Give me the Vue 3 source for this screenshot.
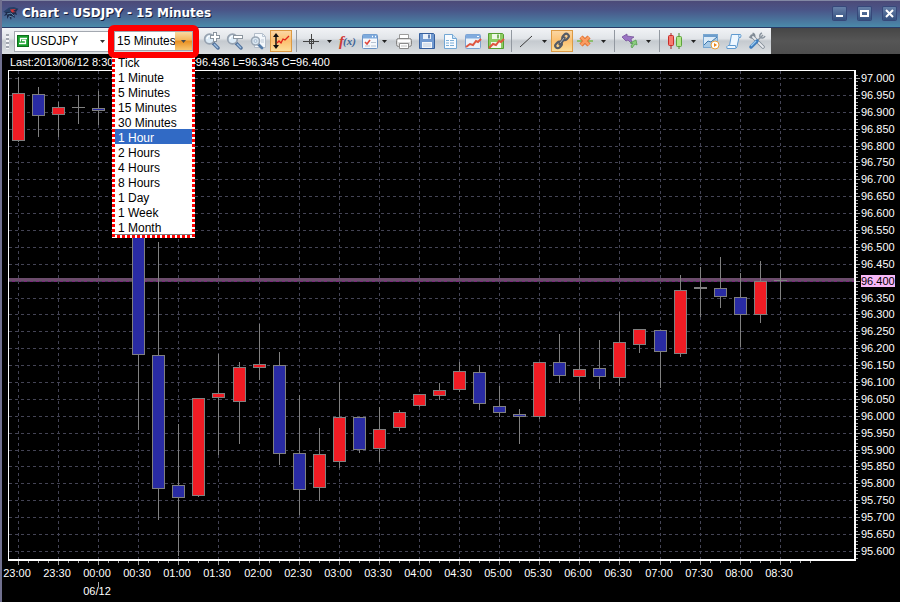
<script setup>
import { ref } from 'vue'

const timeframes = [
  'Tick', '1 Minute', '5 Minutes', '15 Minutes', '30 Minutes', '1 Hour',
  '2 Hours', '4 Hours', '8 Hours', '1 Day', '1 Week', '1 Month'
]
const hovered = ref('1 Hour')
const timeframe = ref('15 Minutes')
const symbol = ref('USDJPY')

const tools = [
  { id: 'zoom-in', label: 'Zoom in' },
  { id: 'zoom-out', label: 'Zoom out' },
  { id: 'zoom-page', label: 'Zoom to page' },
  { id: 'autoscale', label: 'Auto scale', on: true },
  { id: 'sep' },
  { id: 'cross', label: 'Crosshair' },
  { id: 'caret', label: 'Crosshair options' },
  { id: 'fx', label: 'Indicators' },
  { id: 'panel', label: 'Display settings' },
  { id: 'caret', label: 'Display options', tight: true },
  { id: 'print', label: 'Print' },
  { id: 'save', label: 'Save' },
  { id: 'doc', label: 'Export data' },
  { id: 'chart', label: 'Load chart' },
  { id: 'save-chart', label: 'Save chart' },
  { id: 'sep' },
  { id: 'line', label: 'Trend line' },
  { id: 'caret', label: 'Line options' },
  { id: 'link', label: 'Link charts', on: true },
  { id: 'delete', label: 'Delete line' },
  { id: 'caret', label: 'Delete options' },
  { id: 'sep', wide: true },
  { id: 'arrows', label: 'Signals' },
  { id: 'caret', label: 'Signal options' },
  { id: 'sep', wide: true },
  { id: 'candles', label: 'Chart type' },
  { id: 'caret', label: 'Chart type options' },
  { id: 'play', label: 'Replay' },
  { id: 'script', label: 'Script' },
  { id: 'tools', label: 'Settings' }
]

// x position of a candle slot
const slotX = (i) => 18 + 20 * i + Math.floor((i + 10) / 21)

// high, body top, body bottom, low, direction (u: up, d: down, n: flat)
const candles = [
  [77, 93, 141, 142, 'u'], [87, 94, 116, 137, 'd'], [102, 107, 115, 137, 'u'],
  [95, 107, 108, 124, 'n'], [91, 108, 111, 125, 'd'], [100, 111, 175, 190, 'd'],
  [160, 174, 355, 430, 'd'], [242, 355, 489, 520, 'd'], [424, 485, 498, 556, 'd'],
  [398, 398, 496, 497, 'u'], [354, 393, 398, 455, 'u'], [362, 367, 402, 444, 'u'],
  [324, 364, 368, 380, 'u'], [352, 365, 454, 465, 'd'], [395, 453, 490, 515, 'd'],
  [428, 454, 488, 501, 'u'], [382, 417, 462, 468, 'u'], [417, 417, 450, 453, 'd'],
  [407, 429, 449, 462, 'u'], [410, 412, 428, 431, 'u'], [394, 394, 406, 407, 'u'],
  [383, 390, 396, 400, 'u'], [362, 371, 390, 392, 'u'], [365, 372, 404, 410, 'd'],
  [386, 406, 413, 417, 'd'], [409, 414, 417, 444, 'd'], [362, 362, 417, 419, 'u'],
  [334, 362, 376, 383, 'd'], [328, 369, 377, 401, 'u'], [340, 368, 377, 389, 'd'],
  [312, 342, 378, 386, 'u'], [329, 329, 345, 353, 'u'], [330, 330, 352, 388, 'd'],
  [275, 290, 354, 357, 'u'], [267, 287, 289, 317, 'n'], [257, 288, 297, 308, 'd'],
  [273, 297, 315, 347, 'd'], [261, 281, 315, 323, 'u'], [270, 280, 281, 300, 'n']
].map(([high, top, bottom, low, dir], i) => ({ high, top, bottom, low, dir, x: slotX(i) }))

const prices = Array.from({ length: 29 }, (_, k) => ({
  y: Math.round(78 + 16.89 * k),
  text: (97 - 0.05 * k).toFixed(3),
  current: k === 12
}))

const priceTicks = Array.from({ length: 144 }, (_, k) => Math.round(74.6 + 3.378 * k))

const times = Array.from({ length: 20 }, (_, k) => {
  const minutes = (23 * 60 + 30 * k) % 1440
  return {
    x: slotX(2 * k),
    text: String(Math.floor(minutes / 60)).padStart(2, '0') + ':' + String(minutes % 60).padStart(2, '0')
  }
})

const timeTicks = Array.from({ length: 80 }, (_, k) => slotX(Math.floor(k / 2)) + (k % 2) * 10)
</script>

<template>
  <main class="window">
    <header class="titlebar">
      <svg class="logo" viewBox="0 0 18 18" aria-hidden="true">
        <path d="M2 8 L6 5 L11 4 L16 5 L14 8 L15 11 L12 10 L13 14 L10 12 L9 16 L7 12 L5 15 L5 11 L2 12 L4 9 Z" fill="#1d2c4c" />
        <path d="M1 8 L7 3.500 L12 3 L17 5 L11 6 L8 8 L5 8 Z" fill="#263f66" />
        <path d="M8 5.500 L14 5 L11 7 L14 8 L10 8.500 Z" fill="#d2383c" />
        <path d="M5 10 L9 9 L12 12 M7 12 L10 13" stroke="#5f87a8" fill="none" />
      </svg>
      <h1>Chart - {{ symbol }} - {{ timeframe }}</h1>
      <div class="controls">
        <button type="button" aria-label="Minimize">
          <svg viewBox="0 0 13 13"><path d="M3 9h7" stroke="#fff" stroke-width="2" /></svg>
        </button>
        <button type="button" aria-label="Maximize">
          <svg viewBox="0 0 13 13"><rect x="3" y="4" width="7" height="5" fill="none" stroke="#fff" stroke-width="2" /></svg>
        </button>
        <button type="button" aria-label="Close">
          <svg viewBox="0 0 13 13"><path d="M3 3l7 7M10 3l-7 7" stroke="#fff" stroke-width="2" /></svg>
        </button>
      </div>
    </header>

    <div class="toolrow">
      <nav class="toolbar" aria-label="Chart tools">
        <span class="grip"></span>
        <div class="combo symbol">
          <svg class="badge" viewBox="0 0 12 12" aria-hidden="true">
            <rect x="0.500" y="0.500" width="11" height="11" fill="#18a02c" stroke="#0c6e1a" />
            <path d="M10 3.500H3.500v3M2 8.500h6.500v-3H5" fill="none" stroke="#fff" stroke-width="1.300" />
          </svg>
          <select v-model="symbol" aria-label="Symbol">
            <option>USDJPY</option>
          </select>
          <svg class="arrow" viewBox="0 0 5 3" aria-hidden="true"><path d="M0 0h5L2.500 3z" fill="#333" /></svg>
        </div>
        <div class="combo period">
          <select v-model="timeframe" aria-label="Timeframe">
            <option v-for="t in timeframes" :key="t">{{ t }}</option>
          </select>
          <span class="drop">
            <svg viewBox="0 0 5 3" aria-hidden="true"><path d="M0 0h5L2.500 3z" fill="#4a4a4a" /></svg>
          </span>
          <ul class="menu" role="listbox" aria-label="Timeframes">
            <li
              v-for="t in timeframes"
              :key="t"
              role="option"
              :aria-selected="t === hovered"
              :class="{ active: t === hovered }"
              @mouseenter="hovered = t"
              @click="timeframe = t"
            >{{ t }}</li>
          </ul>
          <span class="ring"></span>
        </div>

        <div class="tools">
          <template v-for="(tool, n) in tools" :key="n">
            <span v-if="tool.id === 'sep'" class="sep" :class="{ wide: tool.wide }"></span>
            <button v-else-if="tool.id === 'caret'" type="button" class="caret" :class="{ tight: tool.tight }" :aria-label="tool.label">
              <svg viewBox="0 0 5 3"><path d="M0 0h5L2.500 3z" fill="#222" /></svg>
            </button>
            <button v-else type="button" class="tool" :class="{ on: tool.on }" :aria-label="tool.label">
              <svg viewBox="0 0 18 18" fill="none">
                <template v-if="tool.id === 'zoom-in' || tool.id === 'zoom-out'">
                  <path d="M10 11l5 5" stroke="#54749c" stroke-width="3.500" stroke-linecap="round" />
                  <path d="M11 12l4 4" stroke="#9dc0e4" stroke-width="1.300" />
                  <circle cx="6.500" cy="7" r="4.800" fill="#dcebf7" stroke="#97a3b1" stroke-width="1.800" />
                  <path d="M4 7a3 3 0 0 1 3-3" stroke="#fff" stroke-width="1.200" />
                  <path :d="tool.id === 'zoom-in' ? 'M7 5h10M12 0v10' : 'M7 5h10'" stroke="#8b959f" stroke-width="4" />
                  <path :d="tool.id === 'zoom-in' ? 'M8 5h8M12 1v8' : 'M8 5h8'" stroke="#fff" stroke-width="2" />
                </template>
                <template v-else-if="tool.id === 'zoom-page'">
                  <path d="M5.500 1.500h8l3 3v11h-11z" fill="#f3f7fb" stroke="#b3bdc9" />
                  <path d="M13.500 1.500v3h3M12 8h3M12 10h3" stroke="#bac7d5" />
                  <path d="M9 12l4 4" stroke="#547ba8" stroke-width="2.800" stroke-linecap="round" />
                  <circle cx="6.500" cy="9" r="4" fill="#dbe8f3" stroke="#9aa7b5" stroke-width="1.600" />
                  <circle cx="6.500" cy="9" r="1.500" stroke="#a9bdd1" />
                </template>
                <template v-else-if="tool.id === 'autoscale'">
                  <path d="M4 3v12" stroke="#111" stroke-width="1.500" />
                  <path d="M1 5l3-4 3 4zM1 13l3 4 3-4z" fill="#111" />
                  <path d="M5 11l2-2 2 2 2-4 2 1 4-4" stroke="#e22218" stroke-width="1.300" />
                </template>
                <template v-else-if="tool.id === 'cross'">
                  <path d="M1 9.500h16M9.500 2v15" stroke="#444" />
                  <rect x="7.500" y="7.500" width="4" height="4" stroke="#444" />
                </template>
                <template v-else-if="tool.id === 'fx'">
                  <text x="1" y="14" class="fx-f">f</text>
                  <text x="5" y="13" class="fx-x">(x)</text>
                </template>
                <template v-else-if="tool.id === 'panel'">
                  <rect x="1.500" y="2.500" width="15" height="14" rx="1" fill="#f5f8fc" stroke="#6d94c5" />
                  <path d="M2 4.500h14" stroke="#7daadd" stroke-width="4" />
                  <path d="M11 4.500h1M14 4.500h1" stroke="#fff" stroke-width="1.500" />
                  <path d="M4 10l2 2 3-4" stroke="#e0483c" stroke-width="1.600" />
                  <path d="M10 10.500h5M4 14h5M10 14h5" stroke="#b6c3d2" />
                </template>
                <template v-else-if="tool.id === 'print'">
                  <path d="M4.500 7V2.500h9V7" fill="#fff" stroke="#9b9b9b" />
                  <rect x="1.500" y="6.500" width="15" height="8" rx="2" fill="#ddd" stroke="#858585" />
                  <path d="M3 9h12" stroke="#fff" stroke-width="2" />
                  <path d="M4.500 11.500h9v5h-9z" fill="#fff" stroke="#8c8c8c" />
                  <path d="M6 14h6" stroke="#c3c3c3" />
                </template>
                <template v-else-if="tool.id === 'save'">
                  <path d="M1.500 1.500h14l1 1v14h-15z" fill="#7099d0" stroke="#365f9d" />
                  <rect x="5" y="2" width="8" height="5" fill="#e8f0fa" />
                  <path d="M11 2.500v4" stroke="#365f9d" stroke-width="1.500" />
                  <rect x="4" y="10" width="10" height="6" fill="#f3f6fa" />
                  <path d="M5 12h8M5 14h8" stroke="#bccce0" />
                </template>
                <template v-else-if="tool.id === 'doc'">
                  <path d="M3.500 2.500h8l4 4v10h-12z" fill="#f7fbff" stroke="#72a7d4" />
                  <path d="M11.500 2.500v4h4" fill="#cfe4f6" stroke="#72a7d4" />
                  <path d="M5 8.500h8M5 11h8M5 13.500h8" stroke="#7daed6" stroke-width="1.200" />
                  <path d="M8.500 8v6" stroke="#f7fbff" />
                </template>
                <template v-else-if="tool.id === 'chart'">
                  <rect x="1.500" y="2.500" width="15" height="14" rx="1" fill="#eaf1f9" stroke="#7ba1d0" />
                  <path d="M2 4.500h14" stroke="#81abde" stroke-width="4" />
                  <path d="M13 4.500h2" stroke="#fff" />
                  <path d="M2 15l4-3 3 1 3-4 2 1 3-3" stroke="#df563f" stroke-width="2" />
                </template>
                <template v-else-if="tool.id === 'save-chart'">
                  <path d="M1.500 1.500h14l1 1v14h-15z" fill="#8dcb63" stroke="#559f32" />
                  <rect x="5" y="2" width="8" height="5" fill="#edf8e7" />
                  <path d="M11 2.500v4" stroke="#559f32" stroke-width="1.500" />
                  <rect x="4" y="10" width="10" height="6" fill="#f4f9f0" />
                  <path d="M2 16l4-4 3 1 3-4 2 1 3-3" stroke="#df563f" stroke-width="2" />
                </template>
                <path v-else-if="tool.id === 'line'" d="M3 15L15 4" stroke="#3a3a3a" />
                <template v-else-if="tool.id === 'link'">
                  <rect x="9" y="2.500" width="7" height="5" rx="2.500" transform="rotate(-45 12.500 5)" stroke="#555b66" stroke-width="2.200" />
                  <rect x="2" y="10.500" width="7" height="5" rx="2.500" transform="rotate(-45 5.500 13)" stroke="#555b66" stroke-width="2.200" />
                  <path d="M7 12l4-6" stroke="#555b66" stroke-width="3.500" stroke-linecap="round" />
                  <path d="M7 11l4-5" stroke="#aeb2b8" />
                </template>
                <template v-else-if="tool.id === 'delete'">
                  <path d="M1 9h16" stroke="#78b94f" stroke-width="1.500" />
                  <path d="M5 5l8 8M13 5l-8 8" stroke="#dc6b2b" stroke-width="4.500" />
                  <path d="M5 5l8 8M13 5l-8 8" stroke="#fa9c62" stroke-width="2.500" />
                </template>
                <template v-else-if="tool.id === 'arrows'">
                  <path d="M1 5l5-3 0 2 7 1-3 2 1 5-4-4-2 1z" fill="#9a74c4" stroke="#765099" stroke-width="0.800" />
                  <path d="M9 11l6-3 1 5-2-1-3 4-1-2 2-3z" fill="#8ccf7e" stroke="#579c50" stroke-width="0.800" />
                </template>
                <template v-else-if="tool.id === 'candles'">
                  <path d="M5 1v16" stroke="#a42222" />
                  <rect x="2.500" y="3.500" width="5" height="10" rx="1" fill="#f77a70" stroke="#c72d28" />
                  <path d="M13 1v16" stroke="#4b8c2c" />
                  <rect x="10.500" y="4.500" width="5" height="10" rx="1" fill="#b1e58a" stroke="#5da33b" />
                </template>
                <template v-else-if="tool.id === 'play'">
                  <rect x="1.500" y="2.500" width="14" height="13" fill="#dcebf8" stroke="#78a6d0" />
                  <path d="M2 4h13" stroke="#6d9dcc" stroke-width="2" />
                  <path d="M2 13l4-4 3 1 6-5v10H2z" fill="#a6c9e6" />
                  <path d="M2 13l4-4 3 1 6-5" stroke="#3f77aa" />
                  <circle cx="13" cy="13" r="4" fill="#fff" stroke="#e5a040" />
                  <path d="M12 11l3 2-3 2z" fill="#ee8518" />
                </template>
                <template v-else-if="tool.id === 'script'">
                  <path d="M6.500 2.500h9q1 1 0 3h-1.500l-2 9q-.5 2-2 2h-8q-1-2 1-3h1.500z" fill="#eef7ff" stroke="#5f9ad0" />
                  <path d="M4.500 13.500h6q0 2 1 2.500M14 5.500q-1-2 .5-3" stroke="#5f9ad0" />
                </template>
                <template v-else-if="tool.id === 'tools'">
                  <path d="M4 4l11 11" stroke="#818b96" stroke-width="3.500" stroke-linecap="round" />
                  <path d="M1.500 4.500a3 3 0 0 0 5 0 3 3 0 0 0-2-3" stroke="#818b96" stroke-width="2" />
                  <path d="M5 5l10 10" stroke="#e8ebef" stroke-width="1.800" stroke-linecap="round" />
                  <path d="M15 3l-6 6" stroke="#8c96a1" stroke-width="1.500" />
                  <path d="M14 1a3 3 0 0 0-2 4 3 3 0 0 0 5-1" stroke="#8c96a1" stroke-width="1.500" />
                  <path d="M9 9l-6 6" stroke="#3f7dbd" stroke-width="3.500" stroke-linecap="round" />
                  <path d="M8 9l-5 5" stroke="#9acaf0" stroke-width="1.200" />
                </template>
              </svg>
            </button>
          </template>
        </div>
      </nav>
    </div>

    <section class="chart" aria-label="Price chart">
      <p class="quote">
        <span>Last:2013/06/12 8:30</span>
        <span>=96.436 L=96.345 C=96.400</span>
      </p>
      <svg class="plot" viewBox="2 70 898 532" role="img" aria-label="USDJPY candlesticks">
        <rect class="last-price" x="9" y="278" width="845" height="4" />
        <rect class="last-edge" x="9" y="281" width="845" height="1" />
        <g class="grid">
          <path v-for="p in prices" :key="p.text" :d="`M9 ${p.y}.5H854`" />
          <path v-for="t in times" :key="t.text" :d="`M${t.x}.5 71V559`" />
        </g>
        <g class="ticks">
          <path v-for="y in priceTicks" :key="y" :d="`M856 ${y}.5h2`" />
          <path v-for="p in prices" :key="p.text" :d="`M856 ${p.y}.5h4`" />
          <path v-for="x in timeTicks" :key="x" :d="`M${x}.5 561v2`" />
          <path v-for="t in times" :key="t.text" :d="`M${t.x}.5 561v4`" />
        </g>
        <g v-for="c in candles" :key="c.x" class="candle" :class="c.dir">
          <path :d="`M${c.x}.5 ${c.high}V${c.low}`" />
          <rect v-if="c.dir !== 'n'" :x="c.x - 5.5" :y="c.top + 0.5" width="12" :height="c.bottom - c.top - 1" />
          <rect v-else class="flat" :x="c.x - 6" :y="c.top" width="13" :height="c.bottom - c.top" />
        </g>
        <g class="frame">
          <rect x="8" y="70" width="1" height="490" />
          <rect x="8" y="70" width="847" height="1" />
          <rect x="854" y="70" width="2" height="491" />
          <rect x="8" y="559" width="848" height="2" />
        </g>
        <rect class="current-bg" x="861" y="275" width="34" height="12" />
        <g class="labels">
          <text v-for="p in prices" :key="p.text" x="861" :y="p.y + 4" :class="{ current: p.current }">{{ p.text }}</text>
          <text v-for="t in times" :key="t.text" class="mid" :x="t.x - 1" y="577">{{ t.text }}</text>
          <text class="mid" x="97" y="595">06/12</text>
        </g>
        <path class="date-mark" d="M98.500 582v5" />
      </svg>
    </section>
  </main>
</template>

<style>
body {
  margin: 0;
  background: #000;
}
</style>

<style scoped>
.window {
  box-sizing: border-box;
  border-left: 2px solid #70708f;
  background: #000;
  color: #fff;
  font-family: "Liberation Sans", Arial, sans-serif;
  font-size: 12px;
}

button {
  padding: 0;
  border: 0;
  background: none;
}

.titlebar {
  box-sizing: border-box;
  display: flex;
  align-items: center;
  height: 28px;
  padding: 0 4px 2px 0;
  border-top: 1px solid #8288a4;
  border-bottom: 1px solid #283c68;
  background: linear-gradient(#4c4a78, #4a5588 35%, #4a8aaa);
}

.logo {
  width: 18px;
  height: 18px;
  margin-right: 2px;
}

h1 {
  flex: 1;
  margin: 0;
  font: bold 12px/16px "DejaVu Sans", Verdana, sans-serif;
  text-shadow: 1px 1px 0 #16203c;
}

.controls {
  display: flex;
  gap: 12px;
}

.controls button {
  display: flex;
  width: 13px;
  height: 13px;
  border-radius: 1px;
  background: linear-gradient(#6680a8, #34507f);
  box-shadow: 0 0 0 1px #36487a;
}

.controls svg {
  width: 13px;
  height: 13px;
}

.toolrow {
  background: linear-gradient(#464646, #565656 50%, #4e4e4e);
}

.toolbar {
  display: flex;
  align-items: center;
  box-sizing: border-box;
  width: max-content;
  height: 26px;
  padding: 0 3px;
  background: linear-gradient(#f1f3f6, #e2e5e9 40%, #c5cacf 50%, #dce0e3);
}

.grip {
  width: 3px;
  height: 15px;
  margin: 0 5px 0 1px;
  background: repeating-linear-gradient(#a2a7b0 0 2px, #f5f6f8 2px 4px);
}

.combo {
  position: relative;
  box-sizing: border-box;
  display: flex;
  align-items: center;
  height: 21px;
  border: 1px solid #a3a8b0;
  background: #fff;
}

.symbol {
  width: 95px;
  padding: 0 3px 0 2px;
}

.badge {
  width: 12px;
  height: 12px;
}

.combo select {
  flex: 1;
  min-width: 0;
  padding: 0 0 0 2px;
  border: 0;
  appearance: none;
  background: transparent;
  color: #000;
  font: inherit;
}

.arrow {
  width: 5px;
  height: 3px;
}

.period {
  width: 79px;
  height: 20px;
  margin-left: 5px;
}

.drop {
  display: flex;
  align-items: center;
  justify-content: center;
  width: 17px;
  height: 18px;
  background: linear-gradient(#f9d9a0, #f3b65c 45%, #e98f20 50%, #f8c56f);
}

.drop svg {
  width: 5px;
  height: 3px;
}

.ring {
  position: absolute;
  inset: -7px -7px -8px;
  z-index: 3;
  border: 6px solid #f00;
  border-radius: 6px;
  pointer-events: none;
}

.menu {
  position: absolute;
  top: 22px;
  left: -3px;
  z-index: 2;
  width: 77px;
  margin: 0;
  padding: 0 3px 4px;
  background:
    repeating-linear-gradient(#f00 0 3px, #fff 3px 5px) left / 3px 100% no-repeat,
    repeating-linear-gradient(#f00 0 3px, #fff 3px 5px) right / 3px 100% no-repeat,
    repeating-linear-gradient(90deg, #f00 0 3px, #fff 3px 5px) bottom / 100% 3px no-repeat,
    #808080;
  color: #000;
  list-style: none;
}

.menu li {
  height: 15px;
  padding-left: 3px;
  background: #fff;
  line-height: 18px;
}

.menu .active {
  background: #316ac5;
  color: #fff;
}

.tools {
  display: flex;
  align-items: center;
  gap: 1px;
  margin-left: 8px;
}

.tool {
  box-sizing: border-box;
  display: flex;
  align-items: center;
  justify-content: center;
  width: 22px;
  height: 22px;
}

.tool.on {
  border: 1px solid #dc9a44;
  background: linear-gradient(#fbd6a3, #fcc070 50%, #fddf9a);
}

.tool svg {
  flex: none;
  width: 18px;
  height: 18px;
}

.fx-f {
  fill: #d03a34;
  font: italic bold 15px "Liberation Serif", serif;
}

.fx-x {
  fill: #3a6294;
  font: italic bold 11px "Liberation Serif", serif;
}

.caret {
  display: flex;
  align-items: center;
  justify-content: center;
  width: 12px;
  height: 22px;
}

.caret.tight {
  width: 10px;
  justify-content: flex-start;
}

.caret svg {
  width: 5px;
  height: 3px;
}

.sep {
  width: 6px;
  height: 22px;
  background: linear-gradient(#9298a0, #9298a0) center / 1px 100% no-repeat;
}

.sep.wide {
  width: 8px;
}

.quote {
  display: flex;
  gap: 76px;
  margin: 0;
  padding-left: 8px;
  font-size: 11px;
  line-height: 16px;
  white-space: nowrap;
}

.plot {
  display: block;
  width: 100%;
}

.last-price {
  fill: #6c4c6c;
}

.last-edge {
  fill: #7b257b;
}

.grid path {
  stroke: #444455;
  stroke-dasharray: 3 3;
  shape-rendering: crispEdges;
}

.ticks path,
.date-mark {
  stroke: #a5a5a5;
  shape-rendering: crispEdges;
}

.candle {
  stroke: #808080;
  shape-rendering: crispEdges;
}

.candle.u {
  fill: #f01c24;
}

.candle.d {
  fill: #292ba3;
}

.candle .flat {
  fill: #808080;
  stroke: none;
}

.frame {
  fill: #fff;
}

.current-bg {
  fill: #f8b8f8;
}

.labels text {
  fill: #fff;
  font-size: 11px;
}

.labels .mid {
  text-anchor: middle;
}

.labels text.current {
  fill: #000;
}
</style>
